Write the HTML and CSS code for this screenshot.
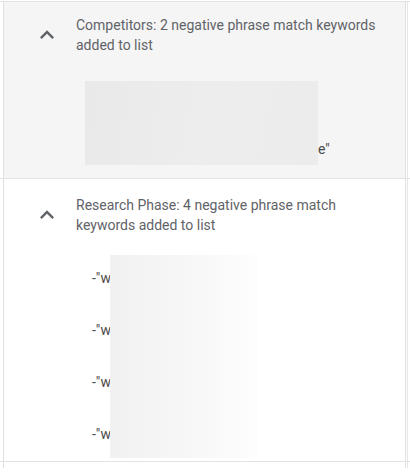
FILE: index.html
```html
<!DOCTYPE html>
<html lang="en">
<head>
<meta charset="utf-8">
<link rel="stylesheet" href="styles.css">
</head>
<body>
<div class="row row-first">
  <div class="panel panel-grey">
    <div class="header header-first">
      <svg class="chev" viewBox="0 0 24 24" width="28" height="28"><path d="M12 8l-6 6 1.41 1.41L12 10.83l4.59 4.58L18 14z" fill="#5f6368"/></svg>
      <div class="title">Competitors: 2 negative phrase match keywords added to list</div>
    </div>
    <div class="kw-one">
      <div class="redact-box"></div>
      <span class="kw-text">e"</span>
    </div>
  </div>
</div>
<div class="row">
  <div class="panel panel-white">
    <div class="header header-second">
      <svg class="chev" viewBox="0 0 24 24" width="28" height="28"><path d="M12 8l-6 6 1.41 1.41L12 10.83l4.59 4.58L18 14z" fill="#5f6368"/></svg>
      <div class="title">Research Phase: 4 negative phrase match keywords added to list</div>
    </div>
    <div class="kw-list">
      <div class="kw-item">-"w</div>
      <div class="kw-item">-"w</div>
      <div class="kw-item">-"w</div>
      <div class="kw-item">-"w</div>
      <div class="redact-fade"></div>
    </div>
  </div>
</div>
<div class="row row-last">
  <div class="panel panel-stub"></div>
</div>
</body>
</html>
```
FILE: styles.css
```css
html, body {
  margin: 0;
  padding: 0;
  background: #ffffff;
}
body {
  width: 410px;
  height: 476px;
  padding-top: 1px;
  box-sizing: border-box;
  font-family: Roboto, "Liberation Sans", Arial, sans-serif;
  font-size: 14px;
  color: #5f6368;
}
.row {
  border-bottom: 1px solid #e2e2e2;
}
.row-first {
  border-top: 1px solid #e2e2e2;
}
.row-last {
  border-bottom: none;
}
.panel {
  margin: 0 4px 0 3px;
  border-left: 1px solid #e0e0e0;
  border-right: 1px solid #e0e0e0;
  box-shadow: 1px 0 0 #ffffff, 2px 0 0 #e6e6e6;
}
.panel-grey {
  background: #f5f5f5;
  height: 176px;
  box-sizing: border-box;
}
.panel-white {
  background: #ffffff;
  height: 282px;
  box-sizing: border-box;
}
.panel-stub {
  height: 6px;
}
.header {
  display: flex;
  align-items: center;
  padding: 0 24px 0 29px;
}
.header-first {
  padding-top: 13px;
}
.header-second {
  padding-top: 16px;
}
.chev {
  flex: 0 0 28px;
  margin-right: 15px;
}
.title {
  line-height: 20px;
  color: #5f6368;
}
.kw-one {
  display: flex;
  align-items: flex-end;
  margin: 26px 0 0 81px;
}
.redact-box {
  width: 233px;
  height: 84px;
  background: linear-gradient(100deg, #e9e9e9 0%, #ededed 50%, #ececec 100%);
}
.kw-text {
  line-height: 20px;
  margin-bottom: 6px;
  color: #4a4a4a;
}
.kw-list {
  position: relative;
  display: flex;
  flex-direction: column;
  gap: 32px;
  margin-top: 20px;
  padding: 13px 0 14px 88px;
}
.kw-item {
  line-height: 20px;
  color: #4a4a4a;
}
.redact-fade {
  position: absolute;
  top: 0;
  bottom: 0;
  left: 106px;
  width: 147px;
  background: linear-gradient(90deg, #f1f1f1 0%, #f6f6f6 45%, #fdfdfd 100%);
}
```
